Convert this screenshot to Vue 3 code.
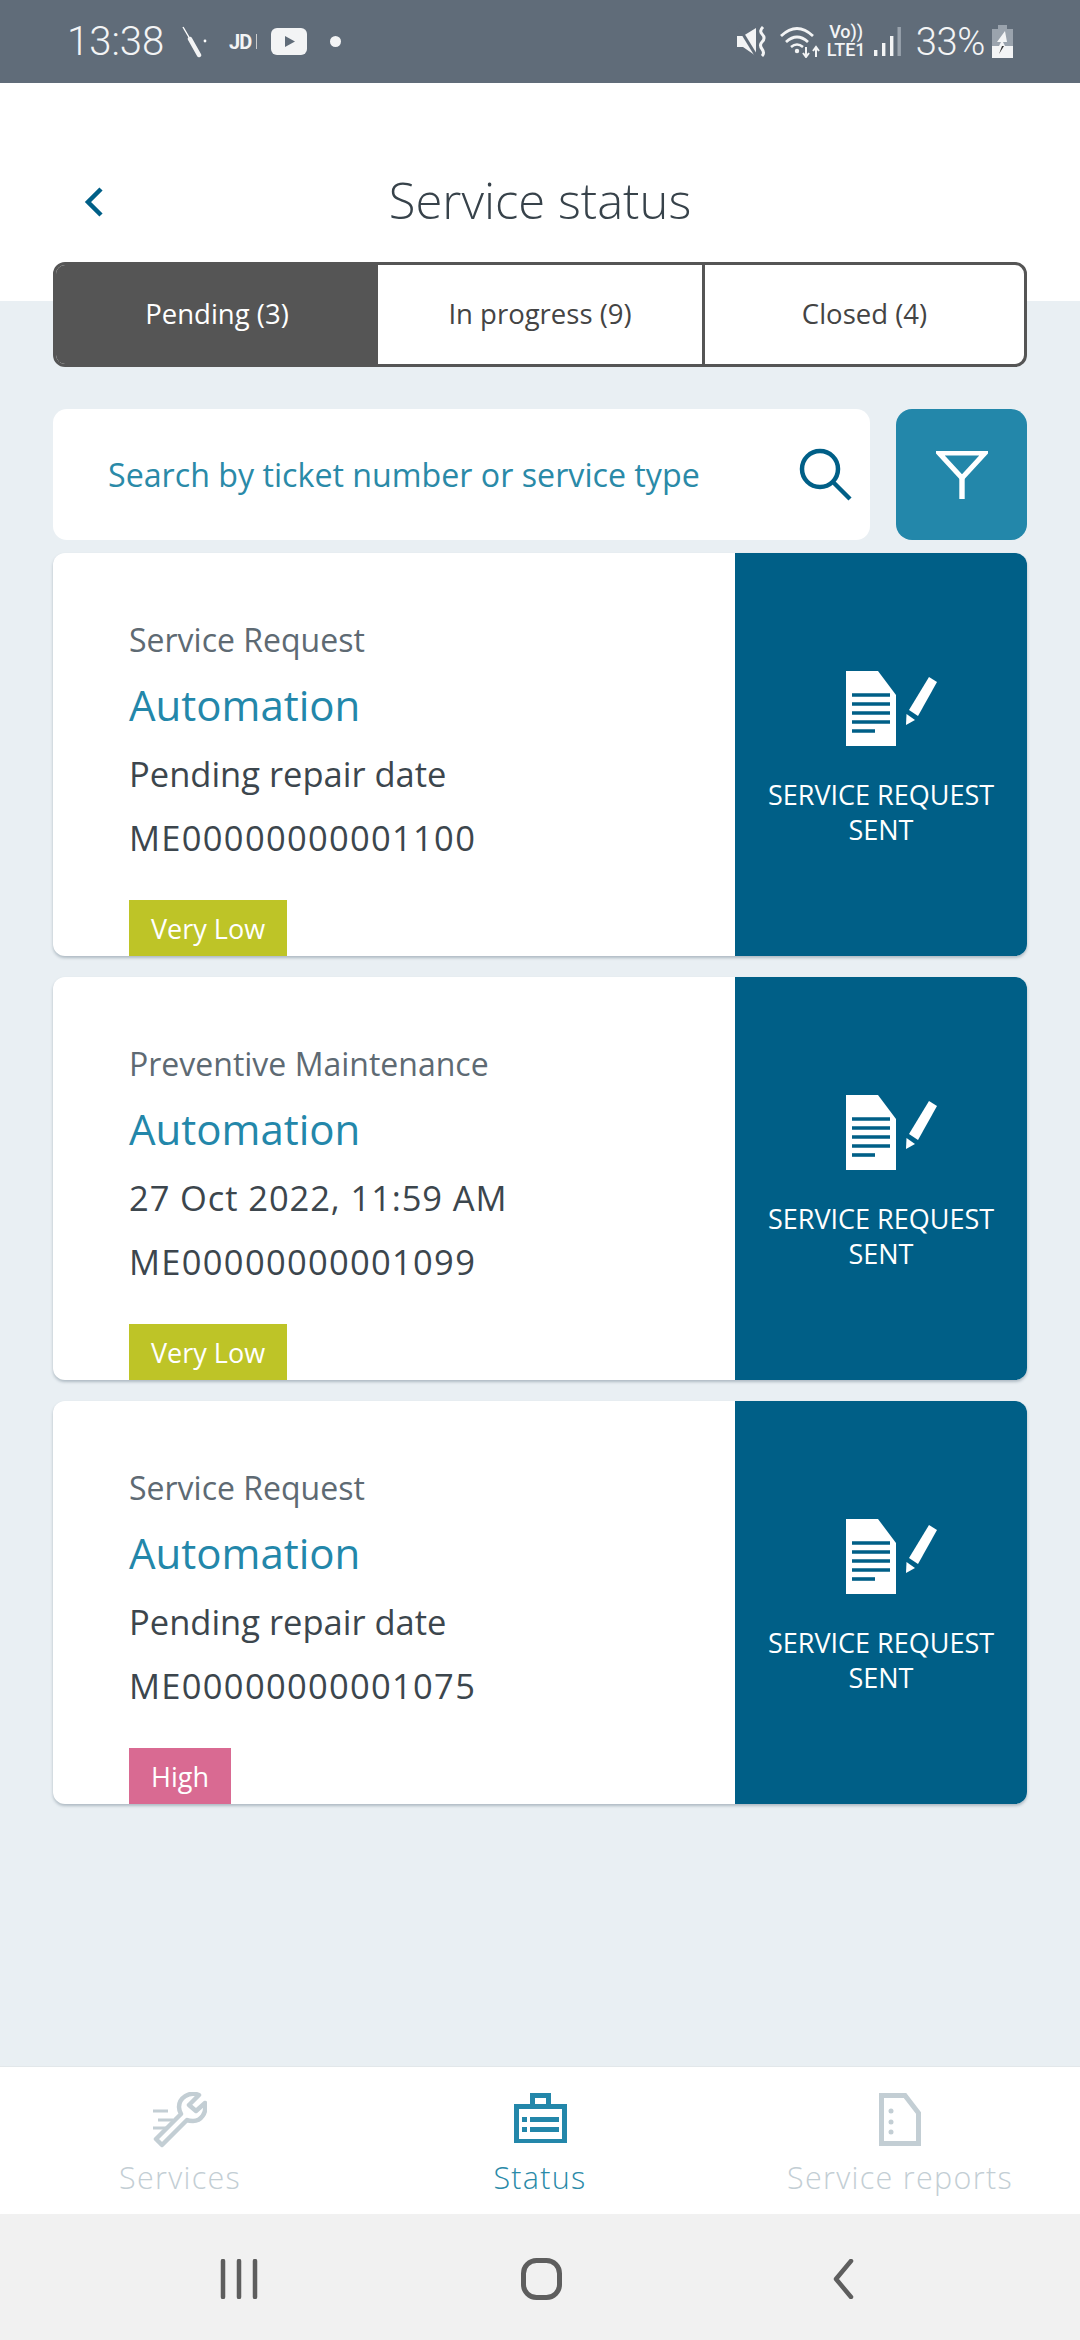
<script setup>
const tabs = [
  { label: 'Pending (3)', active: true },
  { label: 'In progress (9)', active: false },
  { label: 'Closed (4)', active: false },
]
const cards = [
  { type: 'Service Request', info: 'Pending repair date', id: 'ME00000000001100', tag: 'Very Low', cls: 'low', dated: false },
  { type: 'Preventive Maintenance', info: '27 Oct 2022, 11:59 AM', id: 'ME00000000001099', tag: 'Very Low', cls: 'low', dated: true },
  { type: 'Service Request', info: 'Pending repair date', id: 'ME00000000001075', tag: 'High', cls: 'high', dated: false },
]
</script>

<template>
  <div class="page">
    <div class="status">
      <div class="st-left">
        <span class="time">13:38</span>
        <svg class="i-tool" width="25" height="32" viewBox="0 0 25 32"><path d="M1 1 L8 13" stroke="#fff" stroke-width="1.4" fill="none"/><path d="M8 13 L17 29" stroke="#f2f3f4" stroke-width="4.5" stroke-linecap="round" fill="none"/><circle cx="23" cy="15" r="1.4" fill="#fff"/></svg>
        <span class="jd">JD</span><span class="jd-bar"></span>
        <svg class="i-yt" width="36" height="27" viewBox="0 0 36 27"><rect width="36" height="27" rx="6" fill="#f3f4f5"/><path d="M14 8 L24 13.5 L14 19 Z" fill="#606c79"/></svg>
        <span class="dot"></span>
      </div>
      <div class="st-right">
        <svg width="30" height="31" viewBox="0 0 30 31"><path d="M0 10 H6 L19 2 V30 L6 21 H0 Z" fill="#f3f4f5"/><path d="M1 0 L20 31" stroke="#606c79" stroke-width="3"/><path d="M26 1 Q22 5 25 8 Q29 12 25 16 Q22 19 25 23 Q28 27 25 30" stroke="#f3f4f5" stroke-width="3" fill="none"/></svg>
        <svg class="i-wifi" width="41" height="32" viewBox="0 0 41 32"><path d="M1 10 Q17 -5 33 10" stroke="#f3f4f5" stroke-width="2.8" fill="none"/><path d="M6 16 Q17 6 28 16" stroke="#f3f4f5" stroke-width="2.8" fill="none"/><path d="M11 21 Q17 16 23 21" stroke="#f3f4f5" stroke-width="2.6" fill="none"/><circle cx="17" cy="25" r="2.2" fill="#f3f4f5"/><path d="M26 21 V31 M23 27 L26 31 L29 27 M36 31 V21 M33 25 L36 21 L39 25" stroke="#f3f4f5" stroke-width="2" fill="none"/></svg>
        <div class="volte"><span class="vo">Vo))</span><span class="lte">LTE1</span></div>
        <svg class="i-sig" width="27" height="29" viewBox="0 0 27 29"><rect x="0" y="23" width="3.400" height="6" fill="#f3f4f5"/><rect x="8" y="16" width="3.400" height="13" fill="#f3f4f5"/><rect x="16" y="9" width="3.400" height="20" fill="#f3f4f5"/><rect x="23.500" y="0" width="3.400" height="29" fill="#9aa3ad"/></svg>
        <span class="pct">33%</span>
        <svg class="i-bat" width="21" height="33" viewBox="0 0 21 33"><rect x="6" y="0" width="9" height="4" fill="#9aa3ad"/><rect x="0" y="4" width="21" height="17" fill="#9aa3ad"/><rect x="0" y="21" width="21" height="12" fill="#f3f4f5"/><path d="M13 6 L5 17 H9 L7 21 H13 L11 17 H15 Z" fill="#f3f4f5"/><path d="M10 21 L7 29 L12 21 Z" fill="#333"/></svg>
      </div>
    </div>

    <div class="head">
      <div class="title-row">
        <svg class="back" width="20" height="30" viewBox="0 0 20 30"><path d="M18 2 L5 15 L18 28" stroke="#005f87" stroke-width="4.500" fill="none"/></svg>
        <h1 class="title">Service status</h1>
      </div>
    </div>

    <div class="content">
      <div class="tabs">
        <div v-for="t in tabs" :key="t.label" class="tab" :class="{ active: t.active }">{{ t.label }}</div>
      </div>

      <div class="search-row">
        <div class="search">
          <span class="ph">Search by ticket number or service type</span>
          <svg width="54" height="54" viewBox="0 0 54 54"><circle cx="21" cy="21" r="18" stroke="#005f87" stroke-width="4.500" fill="none"/><path d="M34 34 L51 51" stroke="#005f87" stroke-width="4.500" fill="none"/></svg>
        </div>
        <div class="filter">
          <svg width="52" height="48" viewBox="0 0 52 48"><path d="M3 2 H49 L26 27 Z" stroke="#fff" stroke-width="5" fill="none"/><path d="M26 26 V48" stroke="#fff" stroke-width="5.400"/></svg>
        </div>
      </div>

      <div class="cards">
        <div v-for="c in cards" :key="c.id" class="card">
          <div class="card-main">
            <div class="c-type">{{ c.type }}</div>
            <div class="c-name">Automation</div>
            <div class="c-info" :class="{ dated: c.dated }">{{ c.info }}</div>
            <div class="c-id">{{ c.id }}</div>
            <div class="c-tag" :class="c.cls">{{ c.tag }}</div>
          </div>
          <div class="card-side">
            <svg class="side-icon" width="92" height="76" viewBox="0 0 92 76">
              <path d="M0 0 H32 L50 24 V75 H0 Z" fill="#fff"/>
              <path d="M6 24 H44 M6 33 H44 M6 42 H44 M6 51 H44" stroke="#005f87" stroke-width="3.600"/>
              <path d="M6 60 H29" stroke="#005f87" stroke-width="3.600"/>
              <path d="M83 6 L91 11 L72 45 L63 39 Z" fill="#fff"/>
              <path d="M60.500 43 L69 49 L60 54 Z" fill="#fff"/>
            </svg>
            <div class="side-text">SERVICE REQUEST<br>SENT</div>
          </div>
        </div>
      </div>
    </div>

    <div class="nav">
      <div class="nav-item">
        <div class="nav-icon">
          <svg width="54" height="56" viewBox="0 0 54 56"><path d="M46 3 C36 -1 26 6 26 15 C26 18 27 20 28 22 L3 47 L9 53 L34 28 C36 29 38 29 40 29 C48 29 54 21 52 11 L43 19 L36 13 Z" fill="none" stroke="#c3ced4" stroke-width="4.500" stroke-linejoin="round"/><path d="M0 19 H15 M5 28 H20 M0 36 H13" stroke="#c3ced4" stroke-width="3.200"/></svg>
        </div>
        <span class="nav-label">Services</span>
      </div>
      <div class="nav-item on">
        <div class="nav-icon">
          <svg class="i-status" width="53" height="50" viewBox="0 0 53 50"><path d="M16 0 H37 V11 H53 V50 H0 V11 H16 Z M21 5 V11 H32 V5 Z M5 16 V46 H48 V16 Z" fill="#2387aa" fill-rule="evenodd"/><path d="M8 24 H13 V29 H8 Z M16 24 H45 V29 H16 Z M8 34 H13 V39 H8 Z M16 34 H45 V39 H16 Z" fill="#2387aa"/></svg>
        </div>
        <span class="nav-label">Status</span>
      </div>
      <div class="nav-item">
        <div class="nav-icon">
          <svg class="i-status" width="42" height="53" viewBox="0 0 42 53"><path d="M2.500 2.500 H26 L39.500 20 V50.500 H2.500 Z" fill="none" stroke="#c3ced4" stroke-width="5"/><circle cx="12" cy="18" r="2.500" fill="#c3ced4"/><circle cx="12" cy="29" r="2.500" fill="#c3ced4"/><circle cx="12" cy="39" r="2.500" fill="#c3ced4"/></svg>
        </div>
        <span class="nav-label">Service reports</span>
      </div>
    </div>

    <div class="sysbar">
      <svg width="38" height="40" viewBox="0 0 38 40"><path d="M3 2 V38 M19 2 V38 M35 2 V38" stroke="#5e5e5e" stroke-width="4.500" stroke-linecap="round"/></svg>
      <svg width="41" height="42" viewBox="0 0 41 42"><rect x="2.500" y="2.500" width="36" height="37" rx="13" stroke="#5e5e5e" stroke-width="5" fill="none"/></svg>
      <svg width="21" height="40" viewBox="0 0 21 40"><path d="M18 2 L3 20 L18 38" stroke="#5e5e5e" stroke-width="4.500" stroke-linecap="round" stroke-linejoin="round" fill="none"/></svg>
    </div>
  </div>
</template>

<style>
html, body { margin: 0; padding: 0; }
</style>

<style scoped>
.page {
  width: 1080px;
  height: 2340px;
  display: flex;
  flex-direction: column;
  background: #e9eff3;
  font-family: "Open Sans", "Noto Sans", sans-serif;
  overflow: hidden;
}
.status {
  height: 83px;
  flex: none;
  background: #606c79;
  color: #f3f4f5;
  display: flex;
  align-items: center;
  justify-content: space-between;
  padding: 0 67px 0 67px;
  font-family: Roboto, sans-serif;
}
.st-left, .st-right { display: flex; align-items: center; }
.time { font-size: 40px; font-weight: 300; width: 115px; }
.jd { font-size: 20px; font-weight: 700; margin-left: 22px; letter-spacing: -1px; }
.jd-bar { width: 1px; height: 15px; background: #ccc; margin-left: 5px; }
.i-yt { margin-left: 14px; }
.dot { width: 11px; height: 11px; border-radius: 50%; background: #f3f4f5; margin-left: 23px; }
.i-wifi { margin-left: 13px; }
.volte { display: flex; flex-direction: column; align-items: center; width: 37px; margin-left: 7px; margin-top: -2px; }
.vo { font-size: 18px; font-weight: 500; line-height: 18px; }
.lte { font-size: 18px; font-weight: 500; line-height: 18px; white-space: nowrap; }
.i-sig { margin-left: 9px; }
.pct { font-size: 38px; font-weight: 300; margin-left: 15px; letter-spacing: -0.3px; }
.i-bat { margin-left: 7px; }

.head {
  height: 218px;
  flex: none;
  background: #fff;
  position: relative;
}
.title-row {
  height: 96px;
  padding-top: 69px;
  display: flex;
  align-items: center;
  justify-content: center;
  position: relative;
}
.back { position: absolute; left: 83px; top: 104px; }
.title {
  margin: 0;
  font-size: 49px;
  line-height: 60px;
  font-weight: 300;
  color: #37424a;
}

.content {
  flex: 1;
  padding: 0 53px;
  margin-top: -39px;
  position: relative;
}
.tabs {
  height: 105px;
  box-sizing: border-box;
  display: grid;
  grid-template-columns: 322px 327px 1fr;
  background: #fff;
  border: 3px solid #555;
  border-radius: 12px;
  overflow: hidden;
}
.tab {
  display: flex;
  align-items: center;
  justify-content: center;
  font-size: 27.500px;
  color: #444;
  box-sizing: border-box;
  padding-bottom: 2px;
}
.tab:nth-child(2) { border-right: 3px solid #555; }
.tab.active { background: #555; color: #fff; }

.search-row {
  display: flex;
  gap: 26px;
  margin-top: 42px;
}
.search {
  flex: 1;
  height: 131px;
  background: #fff;
  border-radius: 14px;
  display: flex;
  align-items: center;
  justify-content: space-between;
  padding: 0 17px 0 55px;
}
.ph { font-size: 32.200px; color: #2a8aa8; }
.filter {
  width: 131px;
  height: 131px;
  background: #2387aa;
  border-radius: 16px;
  display: flex;
  align-items: center;
  justify-content: center;
}

.cards {
  display: flex;
  flex-direction: column;
  gap: 21px;
  margin-top: 13px;
}
.card {
  height: 403px;
  display: flex;
  background: #fff;
  border-radius: 12px;
  overflow: hidden;
  box-shadow: 0 2px 3px rgba(90, 110, 125, 0.4);
}
.card-main {
  flex: 1;
  padding: 66px 0 0 76px;
  display: flex;
  flex-direction: column;
  align-items: flex-start;
  position: relative;
}
.c-type { font-size: 32px; line-height: 42px; color: #5e6a73; }
.c-name { font-size: 42px; line-height: 60px; color: #2387aa; margin-top: 14px; }
.c-info { font-size: 34.500px; line-height: 48px; color: #3c464d; margin-top: 15px; }
.c-info.dated { letter-spacing: 0.9px; }
.c-id { font-size: 34.500px; letter-spacing: 1.300px; line-height: 48px; color: #3c464d; margin-top: 16px; }
.c-tag {
  position: absolute;
  left: 76px;
  bottom: 0;
  height: 56px;
  padding: 0 22px;
  display: flex;
  align-items: center;
  font-size: 27px;
  color: #fff;
}
.low { background: #bec427; }
.high { background: #d96a92; }
.card-side {
  width: 292px;
  flex: none;
  background: #005f87;
  display: flex;
  flex-direction: column;
  align-items: center;
  padding-top: 118px;
  box-sizing: border-box;
}
.side-icon { margin-left: 22px; }
.side-text {
  margin-top: 30px;
  text-align: center;
  color: #fff;
  font-size: 27px;
  line-height: 35px;
}

.nav {
  height: 148px;
  flex: none;
  background: #fff;
  display: grid;
  grid-template-columns: repeat(3, 1fr);
  border-top: 1px solid #e2e7ea;
  box-sizing: border-box;
}
.nav-item {
  display: flex;
  flex-direction: column;
  align-items: center;
  padding-top: 25px;
  color: #c3ced4;
  height: 147px;
  box-sizing: border-box;
}
.nav-icon { height: 58px; }
.i-status { margin-top: 1px; }
.nav-item.on { color: #2a8aa8; }
.nav-label { font-size: 30.500px; line-height: 40px; margin-top: 7px; letter-spacing: 1.300px; font-weight: 300; }
.sysbar {
  height: 126px;
  flex: none;
  background: #f1f1f1;
  display: grid;
  grid-template-columns: repeat(3, 302px);
  justify-content: center;
  justify-items: center;
  align-items: center;
  padding: 4px 0 0 2px;
  box-sizing: border-box;
}
</style>
